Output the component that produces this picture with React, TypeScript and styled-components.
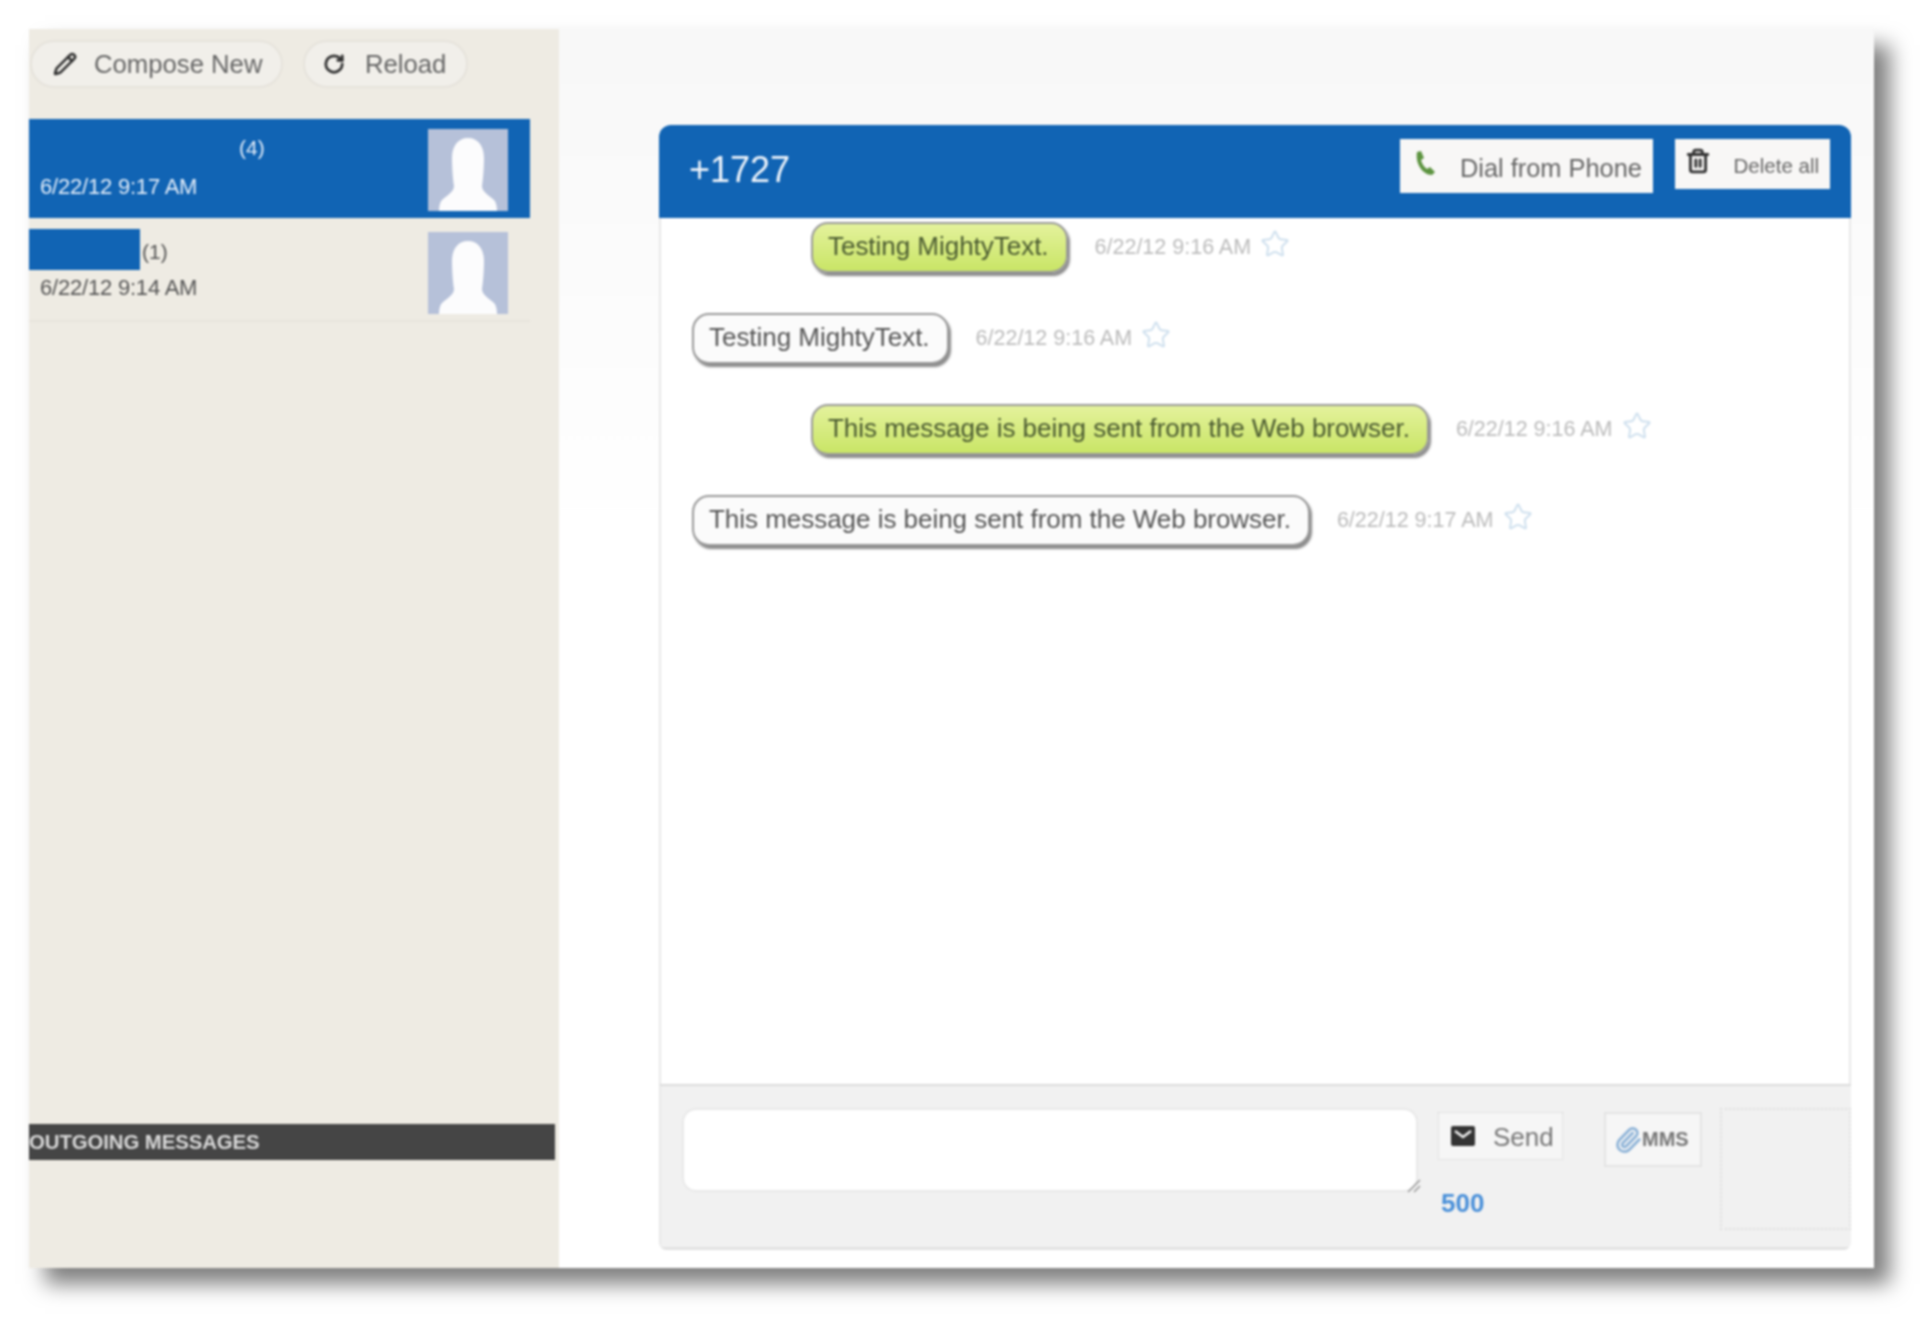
import React from "react";
import styled, { createGlobalStyle } from "styled-components";
import { Pencil, RotateCw, Star, Trash2, Paperclip } from "lucide-react";

const GlobalStyle = createGlobalStyle`
  html, body {
    margin: 0;
    padding: 0;
    background: #fff;
  }
  body {
    font-family: "Liberation Sans", Arial, sans-serif;
    color: #444;
  }
`;

const Page = styled.div`
  width: 1920px;
  height: 1319px;
  padding: 29px 46px 51px 29px;
  box-sizing: border-box;
  filter: blur(0.8px);
  overflow: hidden;
`;

const Window = styled.div`
  display: flex;
  height: 100%;
  background: #fff;
  box-shadow: 16px 16px 20px rgba(0, 0, 0, 0.5);
`;

const Sidebar = styled.aside`
  width: 530px;
  flex-shrink: 0;
  display: flex;
  flex-direction: column;
  background: #eeebe3;
  padding-bottom: 108px;
  box-sizing: border-box;
`;

const Toolbar = styled.div`
  display: flex;
  gap: 20px;
  padding: 11px 0 0 1px;
  height: 90px;
  box-sizing: border-box;
`;

const PillButton = styled.div<{ $width: number }>`
  display: flex;
  align-items: center;
  gap: ${(p) => (p.$width > 200 ? 17 : 20)}px;
  width: ${(p) => p.$width}px;
  height: 48px;
  padding-left: ${(p) => (p.$width > 200 ? 21 : 18)}px;
  box-sizing: border-box;
  border: 2px solid #e6e3dc;
  border-radius: 24px;
  background: #f1efea;
  font-size: 25.7px;
  color: #666;
  white-space: nowrap;

  svg {
    color: #333;
    flex-shrink: 0;
  }
`;

const ThreadRow = styled.div<{ $active?: boolean }>`
  width: 501px;
  height: ${(p) => (p.$active ? 99 : 100)}px;
  margin-bottom: ${(p) => (p.$active ? 4 : 0)}px;
  display: flex;
  justify-content: space-between;
  box-sizing: border-box;
  padding: 10px 22px 0 0;
  background: ${(p) => (p.$active ? "#1164b4" : "transparent")};
  color: ${(p) => (p.$active ? "#e4eefa" : "#555")};
  border-bottom: ${(p) => (p.$active ? "none" : "2px solid #e8e4dc")};
`;

const ThreadText = styled.div`
  display: flex;
  flex-direction: column;
  font-size: 20px;
`;

const ThreadName = styled.div<{ $redacted?: boolean }>`
  display: flex;
  align-items: center;
  height: 42px;
  margin-top: ${(p) => (p.$redacted ? "-4px" : "-2px")};
  gap: 2px;
  font-size: 21px;
`;

const RedactedName = styled.span<{ $width: number; $visible: boolean }>`
  display: block;
  width: ${(p) => p.$width}px;
  height: 41px;
  background: ${(p) => (p.$visible ? "#1164b4" : "transparent")};
`;

const Count = styled.span<{ $redacted?: boolean }>`
  position: relative;
  top: ${(p) => (p.$redacted ? 3 : 0)}px;
`;

const ThreadTime = styled.div`
  padding-left: 11px;
  margin-top: 5px;
  font-size: 22px;
  letter-spacing: -0.2px;
`;

const AvatarBox = styled.div`
  width: 80px;
  height: 82px;
  background: #b6c1d9;
  overflow: hidden;
  flex-shrink: 0;

  svg {
    display: block;
  }
`;

const OutgoingBar = styled.div`
  margin-top: auto;
  height: 36px;
  width: 526px;
  display: flex;
  align-items: center;
  background: #454545;
  color: #d8d8d8;
  font-size: 20.4px;
  font-weight: bold;
  white-space: nowrap;
  letter-spacing: -0.1px;
`;

const Main = styled.main`
  flex: 1;
  padding: 96px 23px 18px 100px;
  min-width: 0;
  background: linear-gradient(180deg, #f8f8f8 0%, #ffffff 40%);
`;

const ChatPanel = styled.section`
  height: 100%;
  display: flex;
  flex-direction: column;
  background: #fff;
  border-radius: 12px 12px 8px 8px;
  overflow: hidden;
`;

const ChatHeader = styled.header`
  height: 93px;
  flex-shrink: 0;
  display: flex;
  align-items: flex-start;
  padding: 14px 21px 0 30px;
  box-sizing: border-box;
  background: #1164b4;
`;

const PhoneNumber = styled.h1`
  margin: 13px auto 0 0;
  font-size: 36px;
  font-weight: normal;
  line-height: 1;
  color: #eef4fb;
`;

const HeaderButton = styled.div<{ $width: number; $height: number; $small?: boolean }>`
  width: ${(p) => p.$width}px;
  height: ${(p) => p.$height}px;
  margin-left: 22px;
  display: flex;
  align-items: center;
  justify-content: space-between;
  padding: 0 11px 0 ${(p) => (p.$small ? 10 : 13)}px;
  box-sizing: border-box;
  background: #f8f7f6;
  font-size: ${(p) => (p.$small ? 20.5 : 25.4)}px;
  color: #666;
  white-space: nowrap;
`;

const ButtonLabel = styled.span`
  position: relative;
  top: 2px;
`;

const ButtonIcon = styled.span`
  display: flex;
  position: relative;
  top: -3px;
`;

const MessageList = styled.div`
  flex: 1;
  display: flex;
  flex-direction: column;
  gap: 40px;
  padding-top: 4px;
  border-left: 2px solid #e8e8e8;
  border-right: 2px solid #e8e8e8;
`;

const MessageRow = styled.div<{ $sent?: boolean }>`
  display: flex;
  align-items: center;
  padding-left: ${(p) => (p.$sent ? 150 : 31)}px;
`;

const Bubble = styled.div<{ $sent?: boolean }>`
  height: 51px;
  display: flex;
  align-items: center;
  padding: 0 17px 2px 15px;
  box-sizing: border-box;
  border: 2px solid #999;
  border-radius: 17px;
  background: ${(p) => (p.$sent ? "linear-gradient(180deg, #e4f29c 0%, #c9e566 100%)" : "#fbfbfb")};
  box-shadow: 2px 3px 2px rgba(60, 60, 60, 0.6);
  font-size: 26px;
  letter-spacing: -0.03px;
  color: ${(p) => (p.$sent ? "#4a5a30" : "#555")};
  white-space: nowrap;
`;

const Timestamp = styled.span`
  margin-left: 27px;
  font-size: 21.5px;
  color: #bbb;
  white-space: nowrap;
`;

const StarIcon = styled(Star)`
  margin: -8px 0 0 9px;
  color: #cfe0ee;
`;

const Composer = styled.div`
  height: 166px;
  flex-shrink: 0;
  display: flex;
  padding: 22px 0 18px 21px;
  box-sizing: border-box;
  background: #f1f1f1;
  border-top: 2px solid #dcdcdc;
  border-bottom: 3px solid #e2e2e2;
  border-left: 2px solid #e8e8e8;
`;

const MessageBox = styled.div`
  width: 736px;
  height: 84px;
  position: relative;
  background: #fff;
  border: 2px solid #e9e9e9;
  border-radius: 14px;
  box-sizing: border-box;
`;

const ResizeGrip = styled.svg`
  position: absolute;
  right: -6px;
  bottom: -4px;
`;

const SendColumn = styled.div`
  width: 166px;
  margin-left: 20px;
  padding-top: 4px;
  display: flex;
  flex-direction: column;
`;

const SendButton = styled.div`
  width: 125px;
  height: 48px;
  display: flex;
  align-items: center;
  gap: 18px;
  padding: 0 0 0 12px;
  box-sizing: border-box;
  background: #f6f6f6;
  border: 1px dotted #d0d0d0;
  font-size: 26px;
  color: #777;
`;

const SendLabel = styled.span`
  position: relative;
  top: 1px;
`;

const CharCount = styled.div`
  margin: 28px 0 0 3px;
  font-size: 26px;
  font-weight: bold;
  color: #4a90d9;
`;

const MmsButton = styled.div`
  width: 98px;
  height: 55px;
  margin-top: 4px;
  display: flex;
  align-items: center;
  padding-left: 8px;
  box-sizing: border-box;
  background: #f6f6f6;
  border: 2px solid #e4e4e4;
  font-size: 20px;
  font-weight: bold;
  color: #777;

  svg {
    color: #8fb4d8;
    flex-shrink: 0;
  }
`;

const DropZone = styled.div`
  width: 131px;
  height: 122px;
  margin-left: auto;
  box-sizing: border-box;
  border: 2px dotted #dedede;
`;

const Avatar: React.FC = () => (
  <AvatarBox>
    <svg width="80" height="82" viewBox="0 0 80 82">
      <path
        d="M40 9c-10 0-16 8-16 20 0 10 1 22 2 28 0 6-8 10-12 14-2 2-3 6-3 11h58c0-5-1-9-3-11-4-4-12-8-12-14 1-6 2-18 2-28 0-12-6-20-16-20z"
        fill="#fcfcfd"
      />
    </svg>
  </AvatarBox>
);

const PhoneGlyph: React.FC = () => (
  <svg width="24" height="26" viewBox="0 0 24 26">
    <path d="M4 2l4-1 3 7-3 2c1 4 3 7 6 9l3-2 5 5-3 3C10 25 2 14 4 2z" fill="#5d9440" />
  </svg>
);

const MailGlyph: React.FC = () => (
  <svg width="24" height="20" viewBox="0 0 24 20">
    <rect x="0" y="0" width="24" height="20" rx="2" fill="#333" />
    <path d="M4 5l8 6 8-6" fill="none" stroke="#f1f1f1" strokeWidth="2.5" />
  </svg>
);

const threads = [
  { count: "(4)", time: "6/22/12 9:17 AM", active: true, nameWidth: 208 },
  { count: "(1)", time: "6/22/12 9:14 AM", active: false, nameWidth: 111 },
];

const messages = [
  { text: "Testing MightyText.", time: "6/22/12 9:16 AM", sent: true },
  { text: "Testing MightyText.", time: "6/22/12 9:16 AM", sent: false },
  { text: "This message is being sent from the Web browser.", time: "6/22/12 9:16 AM", sent: true },
  { text: "This message is being sent from the Web browser.", time: "6/22/12 9:17 AM", sent: false },
];

const App: React.FC = () => {
  return (
    <Page>
      <GlobalStyle />
      <Window>
        <Sidebar>
          <Toolbar>
            <PillButton $width={253}>
              <Pencil size={24} strokeWidth={2.6} />
              Compose New
            </PillButton>
            <PillButton $width={165}>
              <RotateCw size={22} strokeWidth={3} />
              Reload
            </PillButton>
          </Toolbar>
          {threads.map((thread) => (
            <ThreadRow key={thread.time} $active={thread.active}>
              <ThreadText>
                <ThreadName $redacted={!thread.active}>
                  <RedactedName $width={thread.nameWidth} $visible={!thread.active} />
                  <Count $redacted={!thread.active}>{thread.count}</Count>
                </ThreadName>
                <ThreadTime>{thread.time}</ThreadTime>
              </ThreadText>
              <Avatar />
            </ThreadRow>
          ))}
          <OutgoingBar>OUTGOING MESSAGES</OutgoingBar>
        </Sidebar>
        <Main>
          <ChatPanel>
            <ChatHeader>
              <PhoneNumber>+1727</PhoneNumber>
              <HeaderButton $width={253} $height={54}>
                <ButtonIcon>
                  <PhoneGlyph />
                </ButtonIcon>
                <ButtonLabel>Dial from Phone</ButtonLabel>
              </HeaderButton>
              <HeaderButton $width={155} $height={50} $small>
                <ButtonIcon>
                  <Trash2 size={26} strokeWidth={2.6} color="#333" />
                </ButtonIcon>
                <ButtonLabel>Delete all</ButtonLabel>
              </HeaderButton>
            </ChatHeader>
            <MessageList>
              {messages.map((message, index) => (
                <MessageRow key={index} $sent={message.sent}>
                  <Bubble $sent={message.sent}>{message.text}</Bubble>
                  <Timestamp>{message.time}</Timestamp>
                  <StarIcon size={30} strokeWidth={1.6} />
                </MessageRow>
              ))}
            </MessageList>
            <Composer>
              <MessageBox>
                <ResizeGrip width="16" height="16" viewBox="0 0 16 16">
                  <path d="M2 14L14 2M8 14l6-6" stroke="#999" strokeWidth="1.5" />
                </ResizeGrip>
              </MessageBox>
              <SendColumn>
                <SendButton>
                  <MailGlyph />
                  <SendLabel>Send</SendLabel>
                </SendButton>
                <CharCount>500</CharCount>
              </SendColumn>
              <MmsButton>
                <Paperclip size={28} strokeWidth={2.4} />
                MMS
              </MmsButton>
              <DropZone />
            </Composer>
          </ChatPanel>
        </Main>
      </Window>
    </Page>
  );
};

export default App;
